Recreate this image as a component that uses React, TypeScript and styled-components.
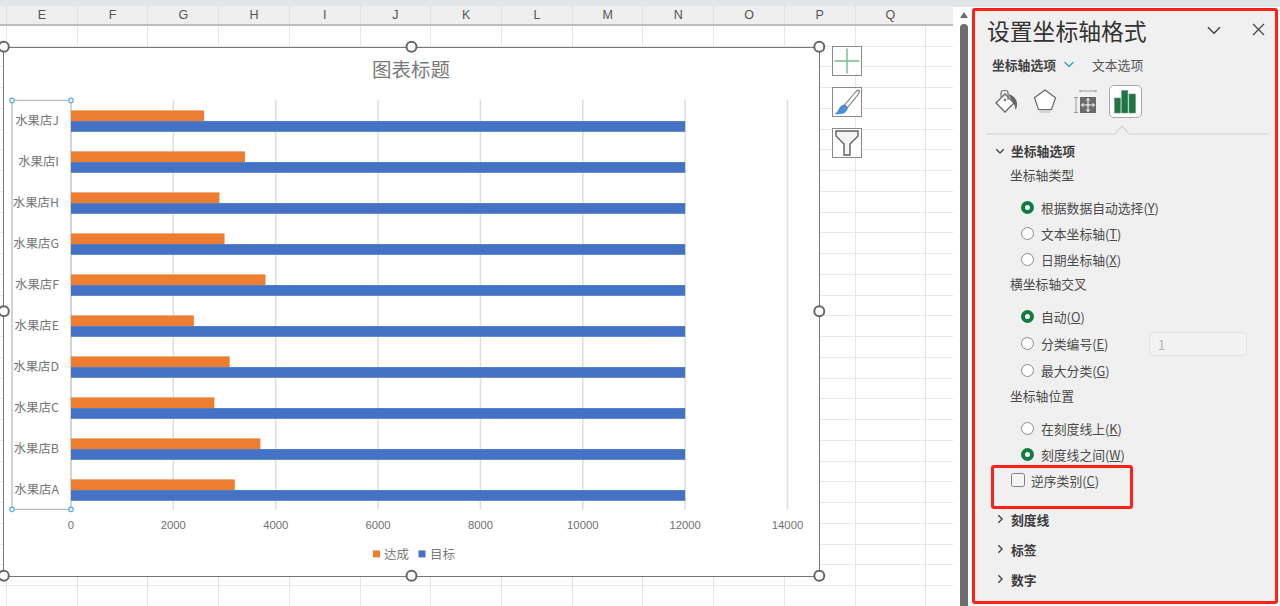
import React from "react";
import styled, { createGlobalStyle } from "styled-components";

const Global = createGlobalStyle`
  html, body { margin: 0; padding: 0; width: 1280px; height: 606px; overflow: hidden; background: #fff; }
  #root { width: 1280px; height: 606px; }
  * { box-sizing: border-box; }
`;

const FONT = `"Noto Sans CJK SC", "Noto Sans", sans-serif`;
const COL = 70.72;

const Page = styled.div`
  display: flex;
  width: 1280px;
  height: 606px;
  padding-top: 6px;
  font-family: ${FONT};
  background: linear-gradient(#e3e6e9 0 7px, #fff 7px);
`;

const Sheet = styled.section`
  width: 953px;
  display: flex;
  flex-direction: column;
  background: #fff;
`;

const ColumnHeader = styled.div`
  height: 20px;
  display: flex;
  padding-left: 6px;
  background: #efefef;
  border-bottom: 2px solid #bdbdbd;
  flex: none;
`;

const ColumnCell = styled.div`
  flex: 0 0 ${COL}px;
  text-align: center;
  font: 12.5px/19px "Liberation Sans", sans-serif;
  color: #555;
  border-left: 1px solid #e2e2e2;
`;

const Grid = styled.div`
  position: relative;
  flex: 1;
  background-color: #fff;
  background-image:
    repeating-linear-gradient(to right, #e6e6e6 0 1px, transparent 1px ${COL}px),
    repeating-linear-gradient(to bottom, transparent 0 19.74px, #e8e8e8 19.74px 20.74px);
  background-position: 6px 0, 0 0;
`;

const ChartFrame = styled.div`
  position: absolute;
  left: 3px;
  top: 20.6px;
  width: 817px;
  height: 530.6px;
  background: #fff;
  border: 1.5px solid #777;
`;

const ChartSvg = styled.svg`
  position: absolute;
  left: -1.5px;
  top: -1.5px;
  overflow: visible;
  font-family: ${FONT};
`;

const ChartTools = styled.div`
  position: absolute;
  left: 832px;
  top: 20px;
  display: flex;
  flex-direction: column;
  gap: 11px;
`;

const ToolButton = styled.div`
  width: 30px;
  height: 30px;
  background: #fff;
  border: 1px solid #8a8a8a;
  display: flex;
  align-items: center;
  justify-content: center;
`;

const ScrollTrack = styled.div`
  width: 17px;
  margin-left: 2px;
  margin-top: 1px;
  padding: 5px 4px 0 5px;
  background: #fff;
  border-radius: 8px 8px 0 0;
  display: flex;
  flex-direction: column;
  align-items: center;
  gap: 6px;
`;

const ScrollArrow = styled.div`
  width: 0;
  height: 0;
  border-left: 4.5px solid transparent;
  border-right: 4.5px solid transparent;
  border-bottom: 6px solid #6d6d6d;
`;

const ScrollThumb = styled.div`
  flex: 1;
  width: 8px;
  background: #6d6d6d;
  border-radius: 4px 4px 0 0;
`;

const Panel = styled.aside`
  position: relative;
  width: 306px;
  height: 596px;
  margin-top: 2px;
  border: 3px solid #ff2018;
  border-radius: 3px;
  background: #f0f0f0;
  color: #444;
  font-size: 12.8px;
`;

const TitleBar = styled.header`
  height: 40px;
  display: flex;
  align-items: center;
  padding-left: 12px;
  color: #333;
`;

const Title = styled.h1`
  margin: 0;
  flex: 1;
  font-size: 22.8px;
  font-weight: 400;
  line-height: 40px;
`;

const TitleIcons = styled.div`
  display: flex;
  align-items: center;
  gap: 30px;
  padding-right: 10px;
  margin-top: -3px;
`;

const Tabs = styled.nav`
  height: 26px;
  display: flex;
  align-items: center;
  padding-left: 17px;
`;

const TabActive = styled.span`
  font-weight: 700;
  color: #444;
  font-size: 12.8px;
`;

const TabChevron = styled.span`
  display: flex;
  margin: 0 17px 0 7px;
`;

const Tab = styled.span`
  font-size: 12.8px;
  color: #555;
`;

const IconRow = styled.div`
  height: 33px;
  margin-top: 8px;
  display: flex;
  align-items: center;
  padding-left: 18px;
`;

const IconCell = styled.div<{ $w: number }>`
  width: ${(p) => p.$w}px;
  height: 33px;
  display: flex;
  align-items: center;
  justify-content: flex-start;
  flex: none;
`;

const ActiveIcon = styled.div`
  width: 33px;
  height: 33px;
  background: #fff;
  border: 1px solid #a8a8a8;
  border-radius: 5px;
  display: flex;
  align-items: center;
  justify-content: center;
`;

const Divider = styled.svg`
  display: block;
  margin: 6px 0 0 11px;
`;

const SectionHeader = styled.div<{ $h: number; $mt?: number }>`
  height: ${(p) => p.$h}px;
  margin-top: ${(p) => p.$mt ?? 0}px;
  display: flex;
  align-items: center;
  padding-left: 19px;
  gap: 6px;
  font-weight: 700;
  color: #3d3d3d;
`;

const ChevronSlot = styled.span`
  width: 11px;
  display: flex;
  justify-content: center;
`;

const GroupLabel = styled.div<{ $mt?: number }>`
  height: 22px;
  margin-top: ${(p) => p.$mt ?? 0}px;
  line-height: 22px;
  padding-left: 35px;
  color: #4a4a4a;
`;

const RadioGroup = styled.div<{ $mt: number; $rowH: number }>`
  margin-top: ${(p) => p.$mt}px;
  padding-left: 46px;
  display: grid;
  grid-auto-rows: ${(p) => p.$rowH}px;
`;

const RadioRow = styled.label`
  display: flex;
  align-items: center;
  gap: 7px;
  color: #4a4a4a;
`;

const RadioDot = styled.span<{ $on?: boolean }>`
  flex: none;
  width: 13px;
  height: 13px;
  border-radius: 50%;
  background: #fff;
  border: ${(p) => (p.$on ? "4px solid #107c41" : "1.2px solid #8c8c8c")};
`;

const DisabledInput = styled.div`
  margin-left: auto;
  margin-right: 28px;
  width: 98px;
  height: 24px;
  padding-left: 8px;
  line-height: 23px;
  color: #b5b5b5;
  background: #f2f2f2;
  border: 1px solid #e4e4e4;
  border-radius: 4px;
`;

const CheckRow = styled.label`
  height: 26px;
  display: flex;
  align-items: center;
  padding-left: 36px;
  gap: 6px;
  color: #4a4a4a;
`;

const CheckBox = styled.span`
  width: 14px;
  height: 14px;
  background: #f6f6f6;
  border: 1.2px solid #808080;
  border-radius: 2.5px;
`;

const Callout = styled.div`
  position: absolute;
  left: 16px;
  top: 454px;
  width: 142px;
  height: 44px;
  border: 3px solid #ff2018;
  border-radius: 3px;
  pointer-events: none;
`;

const columns = ["E", "F", "G", "H", "I", "J", "K", "L", "M", "N", "O", "P", "Q"];
const stores = [
  ["J", 2600], ["I", 3400], ["H", 2900], ["G", 3000], ["F", 3800],
  ["E", 2400], ["D", 3100], ["C", 2800], ["B", 3700], ["A", 3200],
] as const;
const ticks = [0, 2000, 4000, 6000, 8000, 10000, 12000, 14000];
const X0 = 71;
const scale = 0.05118;
const x = (v: number) => X0 + v * scale;

const handles: [number, number][] = [
  [3.8, 47.3], [411.5, 47.3], [819.3, 47.3], [3.8, 311.8], [819.3, 311.8], [3.8, 576.3], [411.5, 576.3], [819.3, 576.3],
];
const smallHandles: [number, number][] = [[12, 101], [71, 101], [12, 510], [71, 510]];

const Chevron = ({ dir, color = "#444", size = 11, w = 1.5 }: { dir: "down" | "right"; color?: string; size?: number; w?: number }) => (
  <svg width={size} height={size} viewBox="0 0 12 12" fill="none" stroke={color} strokeWidth={w}>
    <path d={dir === "down" ? "M1.5 4 L6 8.5 L10.5 4" : "M4 1.5 L8.5 6 L4 10.5"} />
  </svg>
);

const Chart = () => (
  <ChartSvg width={817} height={530.6} viewBox="3 46.6 817 530.6">
    <text x={411} y={69.5} fontSize={19.5} fill="#7a7a7a" textAnchor="middle" dominantBaseline="central">图表标题</text>
    {ticks.slice(1).map((t) => (
      <line key={t} x1={x(t)} x2={x(t)} y1={100} y2={510} stroke="#dedede" strokeWidth={1.5} />
    ))}
    <rect x={12} y={101} width={59} height={409} fill="none" stroke="#bdbdbd" strokeWidth={1.3} />
    {stores.map(([name, v], i) => {
      const top = 111 + i * 41;
      return (
        <g key={name}>
          <rect x={X0} y={top} width={x(v) - X0} height={10.7} fill="#ed7d31" />
          <rect x={X0} y={top + 10.7} width={x(12000) - X0} height={10.7} fill="#4472c4" />
          <text x={59} y={top + 9.5} fontSize={12.4} fill="#757575" textAnchor="end" dominantBaseline="central">
            水果店{name}
          </text>
        </g>
      );
    })}
    {ticks.map((t) => (
      <text key={t} x={x(t)} y={526} fontSize={11.3} fill="#6f6f6f" textAnchor="middle" dominantBaseline="central" fontFamily={'"Liberation Sans", sans-serif'}>
        {t}
      </text>
    ))}
    <rect x={373} y={551} width={7} height={7} fill="#ed7d31" />
    <text x={384} y={554.3} fontSize={12.5} fill="#7a7a7a" dominantBaseline="central">达成</text>
    <rect x={418.5} y={551} width={7} height={7} fill="#4472c4" />
    <text x={430} y={554.3} fontSize={12.5} fill="#7a7a7a" dominantBaseline="central">目标</text>
    {smallHandles.map(([cx, cy]) => (
      <circle key={`${cx}-${cy}`} cx={cx} cy={cy} r={2.2} fill="#fff" stroke="#5aa9e6" strokeWidth={1.2} />
    ))}
    {handles.map(([cx, cy]) => (
      <circle key={`${cx}-${cy}`} cx={cx} cy={cy} r={5} fill="#fff" stroke="#666" strokeWidth={2} />
    ))}
  </ChartSvg>
);

const BucketIcon = () => (
  <svg width="26" height="26" viewBox="0 0 26 26" fill="none">
    <path d="M3 14 L12 5 L21 14 L12 23 Z" fill="#fff" stroke="#666" strokeWidth="1.3" />
    <path d="M8 8 V4 Q8 1.5 10.5 1.5 H12.5 Q15 1.5 15 4 V11" stroke="#777" strokeWidth="1.2" />
    <circle cx="12" cy="11" r="1.3" fill="#777" />
    <path d="M15 5 Q23 7 24 14 Q24.5 18 22.5 21 Q22 16 20 13 Z" fill="#666" />
  </svg>
);

const PentagonIcon = () => (
  <svg width="26" height="28" viewBox="0 0 26 28" fill="none">
    <path d="M7.5 23.5 H18.5" stroke="#d4d4d4" strokeWidth="3" />
    <path d="M13 2 L23.5 9.8 L19.5 21.5 H6.5 L2.5 9.8 Z" fill="#fff" stroke="#666" strokeWidth="1.2" />
  </svg>
);

const SizeIcon = () => (
  <svg width="26" height="26" viewBox="0 0 26 26" fill="none">
    <path d="M7 2 H23 M7 .8 V3.2 M23 .8 V3.2" stroke="#999" strokeWidth="1" />
    <path d="M1 8.5 H5 M1 23.5 H5 M3 8.5 V23.5" stroke="#999" strokeWidth="1" />
    <rect x="7" y="8" width="16" height="16" fill="#6a6a6a" />
    <path d="M15 9.5 V22.5 M8.5 16 H21.5" stroke="#fff" strokeWidth="1.1" />
    <path d="M13.2 11.5 L15 9.5 L16.8 11.5 M13.2 20.5 L15 22.5 L16.8 20.5 M10.5 14.2 L8.5 16 L10.5 17.8 M19.5 14.2 L21.5 16 L19.5 17.8" stroke="#fff" strokeWidth="1" />
  </svg>
);

const BarsIcon = () => (
  <svg width="23" height="24" viewBox="0 0 23 24">
    <rect x="0.5" y="8" width="6" height="15" fill="#217346" stroke="#5f9b7c" strokeWidth=".6" />
    <rect x="7.7" y="0.5" width="6.2" height="22.5" fill="#217346" stroke="#5f9b7c" strokeWidth=".6" />
    <rect x="15" y="4" width="6.5" height="19" fill="#217346" stroke="#5f9b7c" strokeWidth=".6" />
  </svg>
);

const PlusIcon = () => (
  <svg width="28" height="28" viewBox="0 0 28 28" stroke="#70bf86" strokeWidth="1.4">
    <path d="M14 1.5 V26.5 M1.5 14 H26.5" />
  </svg>
);

const BrushIcon = () => (
  <svg width="28" height="28" viewBox="0 0 28 28" fill="none">
    <path d="M11.5 17 L23 3.5 Q25 1.5 26 2.5 Q27 3.5 25.5 6 L14.5 19.5 Z" fill="#fff" stroke="#777" strokeWidth="1.1" />
    <path d="M11 16.5 L15 20 Q13.5 25.5 8 26 Q4 26.5 1.5 26 Q4.5 24.5 5.5 21.5 Q7 17.5 11 16.5 Z" fill="#4a90d9" />
  </svg>
);

const FunnelIcon = () => (
  <svg width="26" height="28" viewBox="0 0 26 28" fill="#f4f4f4" stroke="#5f5f5f" strokeWidth="1.4">
    <path d="M2 2 H24 V7 L16 15 V26 H10 V15 L2 7 Z" />
  </svg>
);

const Mnemonic = ({ label, k }: { label: string; k: string }) => (
  <span>
    {label}(<u>{k}</u>)
  </span>
);

const Radio = ({ label, k, on, children }: { label: string; k: string; on?: boolean; children?: React.ReactNode }) => (
  <RadioRow>
    <RadioDot $on={on} />
    <Mnemonic label={label} k={k} />
    {children}
  </RadioRow>
);

export default function App() {
  return (
    <Page>
      <Global />
      <Sheet>
        <ColumnHeader>
          {columns.map((c) => (
            <ColumnCell key={c}>{c}</ColumnCell>
          ))}
        </ColumnHeader>
        <Grid>
          <ChartFrame>
            <Chart />
          </ChartFrame>
          <ChartTools>
            <ToolButton><PlusIcon /></ToolButton>
            <ToolButton><BrushIcon /></ToolButton>
            <ToolButton><FunnelIcon /></ToolButton>
          </ChartTools>
        </Grid>
      </Sheet>
      <ScrollTrack>
        <ScrollArrow />
        <ScrollThumb />
      </ScrollTrack>
      <Panel>
        <TitleBar>
          <Title>设置坐标轴格式</Title>
          <TitleIcons>
            <Chevron dir="down" size={16} w={1.1} color="#444" />
            <svg width="13" height="13" viewBox="0 0 13 13" stroke="#444" strokeWidth="1.2">
              <path d="M1 1 L12 12 M12 1 L1 12" />
            </svg>
          </TitleIcons>
        </TitleBar>
        <Tabs>
          <TabActive>坐标轴选项</TabActive>
          <TabChevron><Chevron dir="down" size={12} color="#3a9ad9" w={1.3} /></TabChevron>
          <Tab>文本选项</Tab>
        </Tabs>
        <IconRow>
          <IconCell $w={39}><BucketIcon /></IconCell>
          <IconCell $w={41}><PentagonIcon /></IconCell>
          <IconCell $w={36}><SizeIcon /></IconCell>
          <ActiveIcon><BarsIcon /></ActiveIcon>
        </IconRow>
        <Divider width="282" height="11" viewBox="0 0 282 11" fill="none" stroke="#d4d4d4" strokeWidth="1.2">
          <path d="M0 10 H129 L136 2 L143 10 H282" />
        </Divider>
        <SectionHeader $h={27} $mt={2}>
          <ChevronSlot><Chevron dir="down" size={10} w={1.6} /></ChevronSlot>
          坐标轴选项
        </SectionHeader>
        <GroupLabel>坐标轴类型</GroupLabel>
        <RadioGroup $mt={8} $rowH={26}>
          <Radio label="根据数据自动选择" k="Y" on />
          <Radio label="文本坐标轴" k="T" />
          <Radio label="日期坐标轴" k="X" />
        </RadioGroup>
        <GroupLabel $mt={1}>横坐标轴交叉</GroupLabel>
        <RadioGroup $mt={8} $rowH={27}>
          <Radio label="自动" k="O" on />
          <Radio label="分类编号" k="E">
            <DisabledInput>1</DisabledInput>
          </Radio>
          <Radio label="最大分类" k="G" />
        </RadioGroup>
        <GroupLabel $mt={1}>坐标轴位置</GroupLabel>
        <RadioGroup $mt={9} $rowH={25.5}>
          <Radio label="在刻度线上" k="K" />
          <Radio label="刻度线之间" k="W" on />
        </RadioGroup>
        <CheckRow>
          <CheckBox />
          <Mnemonic label="逆序类别" k="C" />
        </CheckRow>
        <SectionHeader $h={26} $mt={13}>
          <ChevronSlot><Chevron dir="right" size={10} w={1.6} /></ChevronSlot>
          刻度线
        </SectionHeader>
        <SectionHeader $h={26} $mt={4}>
          <ChevronSlot><Chevron dir="right" size={10} w={1.6} /></ChevronSlot>
          标签
        </SectionHeader>
        <SectionHeader $h={26} $mt={4}>
          <ChevronSlot><Chevron dir="right" size={10} w={1.6} /></ChevronSlot>
          数字
        </SectionHeader>
        <Callout />
      </Panel>
    </Page>
  );
}
